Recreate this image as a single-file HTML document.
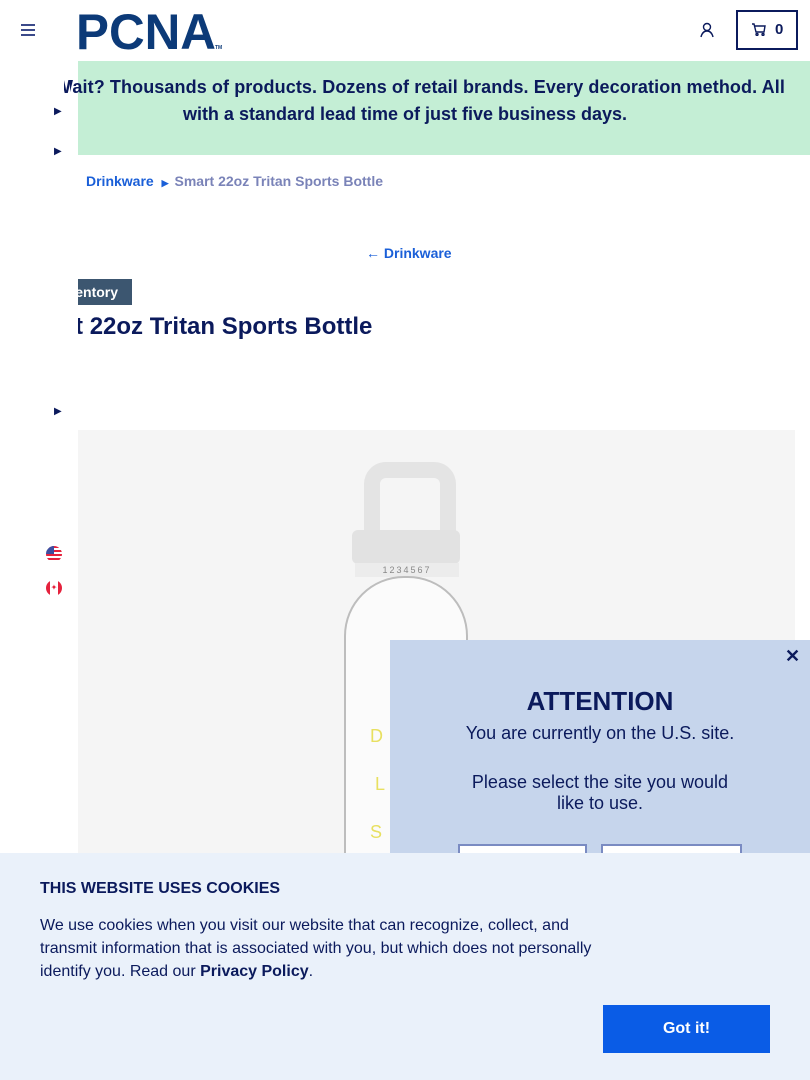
<!DOCTYPE html>
<html><head><meta charset="utf-8"><style>
*{margin:0;padding:0;box-sizing:border-box}
body{width:810px;height:1080px;overflow:hidden;position:relative;background:#fff;font-family:"Liberation Sans",Arial,sans-serif;color:#0b1a5c}
.abs{position:absolute}
</style></head><body>
<!-- header -->
<div class="abs" style="left:21px;top:24px;width:14px;height:2px;background:#3b4a8a;box-shadow:0 5px 0 #3b4a8a,0 10px 0 #3b4a8a"></div>
<svg class="abs" style="left:76px;top:8px" width="150" height="44" viewBox="0 0 150 44"><text x="0" y="41" textLength="140" lengthAdjust="spacingAndGlyphs" font-family="Liberation Sans" font-weight="900" font-size="50" fill="#0c3a78">PCNA</text><text x="139" y="41" font-family="Liberation Sans" font-weight="bold" font-size="5" fill="#0c3a78">TM</text></svg>
<svg class="abs" style="left:699px;top:22px" width="16" height="16" viewBox="0 0 16 16" fill="none" stroke="#0b1a5c" stroke-width="1.4"><circle cx="8" cy="5" r="3.5"/><path d="M2 15c1-4 3-6 6-6s5 2 6 6"/></svg>
<div class="abs" style="left:736px;top:10px;width:62px;height:40px;border:2px solid #0b1a5c"></div>
<svg class="abs" style="left:752px;top:23px" width="14" height="13" viewBox="0 0 14 13" fill="none" stroke="#0b1a5c" stroke-width="1.4"><path d="M0 1h2l2 8h8l1-6H3"/><circle cx="5" cy="11.5" r="1"/><circle cx="11" cy="11.5" r="1"/></svg>
<div class="abs" style="left:775px;top:21px;font:bold 15px 'Liberation Sans'">0</div>
<!-- banner -->
<div class="abs" style="left:50px;top:61px;width:760px;height:94px;background:#c4eed5"></div>
<!-- breadcrumb -->
<div class="abs" style="left:86px;top:173px;font:bold 14px 'Liberation Sans';color:#1a5fd8">Drinkware <span style="color:#1a5fd8;font-size:9px;margin:0 6px 0 4px">&#9654;</span><span style="color:#7a83b8">Smart 22oz Tritan Sports Bottle</span></div>
<div class="abs" style="left:366px;top:245px;font:bold 14px 'Liberation Sans';color:#1a5fd8">&#8592; Drinkware</div>
<div class="abs" style="left:20px;top:279px;width:112px;height:26px;background:#3c5670;color:#fff;font:bold 14px/26px 'Liberation Sans';padding-left:35px">Inventory</div>
<div class="abs" style="left:15px;top:313px;font:bold 24px 'Liberation Sans';color:#0b1a5c;white-space:nowrap">Smart 22oz Tritan Sports Bottle</div>
<!-- product image -->
<div class="abs" style="left:78px;top:430px;width:717px;height:430px;background:#f5f5f5"></div>
<div class="abs" style="left:364px;top:462px;width:92px;height:78px;border:16px solid #e4e4e4;border-bottom-width:10px;border-radius:22px 22px 6px 6px"></div>
<div class="abs" style="left:352px;top:530px;width:108px;height:34px;background:#e2e2e2;border-radius:6px"></div>
<div class="abs" style="left:355px;top:563px;width:104px;height:14px;background:#ececec;font:9px/14px 'Liberation Sans';color:#888;text-align:center;letter-spacing:2px">1234567</div>
<div class="abs" style="left:344px;top:576px;width:124px;height:300px;border:2px solid #bdbdbd;border-bottom:none;border-radius:60px 60px 0 0;background:#fbfbfb"></div>
<div class="abs" style="left:370px;top:712px;font:18px 'Liberation Sans';color:#e8e060;line-height:48px">D<br>&nbsp;L<br>S</div>
<!-- sidebar white overlay -->
<div class="abs" style="left:0;top:61px;width:78px;height:800px;background:#fff"></div>
<div class="abs" style="left:64px;top:74px;width:14px;height:27px;overflow:hidden"><div style="margin-left:-10px;font:bold 18px/27px 'Liberation Sans';color:#0b1a5c">W</div></div>
<div class="abs" style="left:56px;top:74px;white-space:nowrap;font:bold 18px/27px 'Liberation Sans';color:#0b1a5c;letter-spacing:0.1px;clip-path:inset(0 0 0 14px)">Wait? Thousands of products. Dozens of retail brands. Every decoration method. All</div>
<div class="abs" style="left:0;top:101px;width:810px;text-align:center;font:bold 18px/27px 'Liberation Sans';color:#0b1a5c">with a standard lead time of just five business days.</div>
<div class="abs" style="left:54px;top:106px;font-size:10px;color:#0b1a5c">&#9654;</div>
<div class="abs" style="left:54px;top:146px;font-size:10px;color:#0b1a5c">&#9654;</div>
<div class="abs" style="left:54px;top:406px;font-size:10px;color:#0b1a5c">&#9654;</div>
<div class="abs" style="left:46px;top:546px;width:16px;height:16px;border-radius:50%;background:repeating-linear-gradient(#e5223d 0 2px,#fff 2px 4px);overflow:hidden"><div style="width:8px;height:8px;background:#3c4ea0"></div></div>
<div class="abs" style="left:46px;top:580px;width:16px;height:16px;border-radius:50%;background:linear-gradient(90deg,#e5223d 0 4px,#fff 4px 12px,#e5223d 12px);color:#e5223d;font-size:8px;line-height:16px;text-align:center">&#10022;</div>
<!-- modal -->
<div class="abs" style="left:390px;top:640px;width:420px;height:240px;background:#c6d5ec"></div>
<div class="abs" style="left:785px;top:646px;font:bold 18px 'Liberation Sans';color:#0b1a5c">&#10005;</div>
<div class="abs" style="left:390px;top:686px;width:420px;text-align:center;font:bold 26px 'Liberation Sans';color:#0b1a5c">ATTENTION</div>
<div class="abs" style="left:390px;top:723px;width:420px;text-align:center;font:18px/21px 'Liberation Sans';color:#0b1a5c">You are currently on the U.S. site.<br><br><span style="display:inline-block;margin-top:7px">Please select the site you would<br>like to use.</span></div>
<div class="abs" style="left:458px;top:844px;width:129px;height:20px;border:2px solid #7a8bc2;background:#fff"></div>
<div class="abs" style="left:601px;top:844px;width:141px;height:20px;border:2px solid #7a8bc2;background:#fff"></div>
<!-- cookie -->
<div class="abs" style="left:0;top:853px;width:810px;height:227px;background:#eaf1fa"></div>
<div class="abs" style="left:40px;top:880px;font:bold 16px 'Liberation Sans';color:#0b1a5c">THIS WEBSITE USES COOKIES</div>
<div class="abs" style="left:40px;top:914px;width:570px;font:16px/23px 'Liberation Sans';color:#0b1a5c">We use cookies when you visit our website that can recognize, collect, and transmit information that is associated with you, but which does not personally identify you. Read our <b>Privacy Policy</b>.</div>
<div class="abs" style="left:603px;top:1005px;width:167px;height:48px;background:#0a5ce6;color:#fff;font:bold 16px/48px 'Liberation Sans';text-align:center">Got it!</div>
</body></html>
